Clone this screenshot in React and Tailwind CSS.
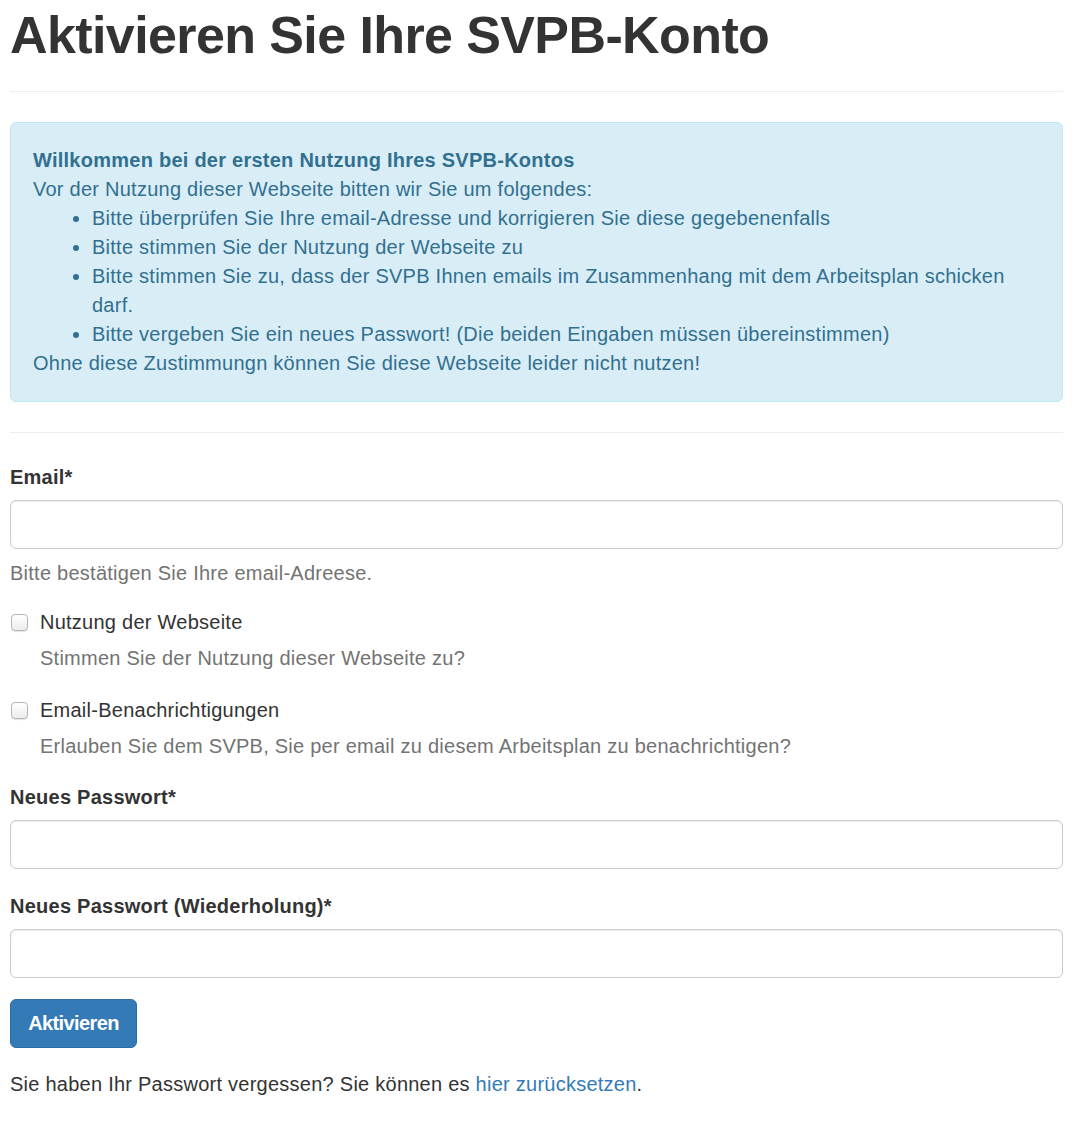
export default function App() {
  const inputCls =
    "mt-[8px] block w-full h-[49px] border border-[#ccc] rounded-[6px] shadow-[inset_0_1px_1px_rgba(0,0,0,0.075)] bg-white";
  return (
    <div className="bg-white min-h-[1125px] text-[#333] text-[20px] leading-[29px] tracking-[0.25px] font-['Liberation_Sans',Arial,sans-serif]">
      <div className="ml-[10px] w-[1053px]">
        <div className="border-b border-[#eee] pt-[7px] pb-[27px]">
          <h1 className="text-[52px] leading-[57px] font-bold tracking-[-0.6px] text-[#333]">Aktivieren Sie Ihre SVPB-Konto</h1>
        </div>

        <div className="mt-[30px] bg-[#d9edf7] border border-[#bce8f1] rounded-[6px] text-[#31708f] px-[22px] py-[23px]">
          <div className="font-bold">Willkommen bei der ersten Nutzung Ihres SVPB-Kontos</div>
          <div>Vor der Nutzung dieser Webseite bitten wir Sie um folgendes:</div>
          <ul className="list-disc pl-[59px]">
            <li>Bitte überprüfen Sie Ihre email-Adresse und korrigieren Sie diese gegebenenfalls</li>
            <li>Bitte stimmen Sie der Nutzung der Webseite zu</li>
            <li>
              Bitte stimmen Sie zu, dass der SVPB Ihnen emails im Zusammenhang mit dem Arbeitsplan schicken
              <br />
              darf.
            </li>
            <li>Bitte vergeben Sie ein neues Passwort! (Die beiden Eingaben müssen übereinstimmen)</li>
          </ul>
          <div>Ohne diese Zustimmungn können Sie diese Webseite leider nicht nutzen!</div>
        </div>

        <div className="mt-[30px] border-t border-[#eee]"></div>

        <div className="mt-[30px]">
          <label className="block font-bold">Email*</label>
          <input type="email" className={inputCls} />
          <div className="mt-[10px] text-[#737373]">Bitte bestätigen Sie Ihre email-Adreese.</div>
        </div>

        <div className="mt-[20px]">
          <label className="flex items-center">
            <span className="w-[17px] h-[17px] ml-[1px] rounded-[4px] border border-[#b5b5b5] bg-gradient-to-b from-white to-[#ececec] shadow-[0_1px_1px_rgba(0,0,0,0.1)]"></span>
            <span className="ml-[12px]">Nutzung der Webseite</span>
          </label>
          <div className="mt-[7px] pl-[30px] text-[#737373]">Stimmen Sie der Nutzung dieser Webseite zu?</div>
        </div>

        <div className="mt-[23px]">
          <label className="flex items-center">
            <span className="w-[17px] h-[17px] ml-[1px] rounded-[4px] border border-[#b5b5b5] bg-gradient-to-b from-white to-[#ececec] shadow-[0_1px_1px_rgba(0,0,0,0.1)]"></span>
            <span className="ml-[12px]">Email-Benachrichtigungen</span>
          </label>
          <div className="mt-[7px] pl-[30px] text-[#737373]">Erlauben Sie dem SVPB, Sie per email zu diesem Arbeitsplan zu benachrichtigen?</div>
        </div>

        <div className="mt-[22px]">
          <label className="block font-bold">Neues Passwort*</label>
          <input type="password" className={inputCls} />
        </div>

        <div className="mt-[23px]">
          <label className="block font-bold">Neues Passwort (Wiederholung)*</label>
          <input type="password" className={inputCls} />
        </div>

        <button className="mt-[21px] block h-[49px] w-[127px] bg-[#337ab7] border border-[#2e6da4] rounded-[6px] text-white text-[20px] font-bold tracking-[-0.6px]">
          Aktivieren
        </button>

        <div className="mt-[22px]">
          Sie haben Ihr Passwort vergessen? Sie können es <a href="#" className="text-[#337ab7]">hier zurücksetzen</a>.
        </div>
      </div>
    </div>
  );
}
